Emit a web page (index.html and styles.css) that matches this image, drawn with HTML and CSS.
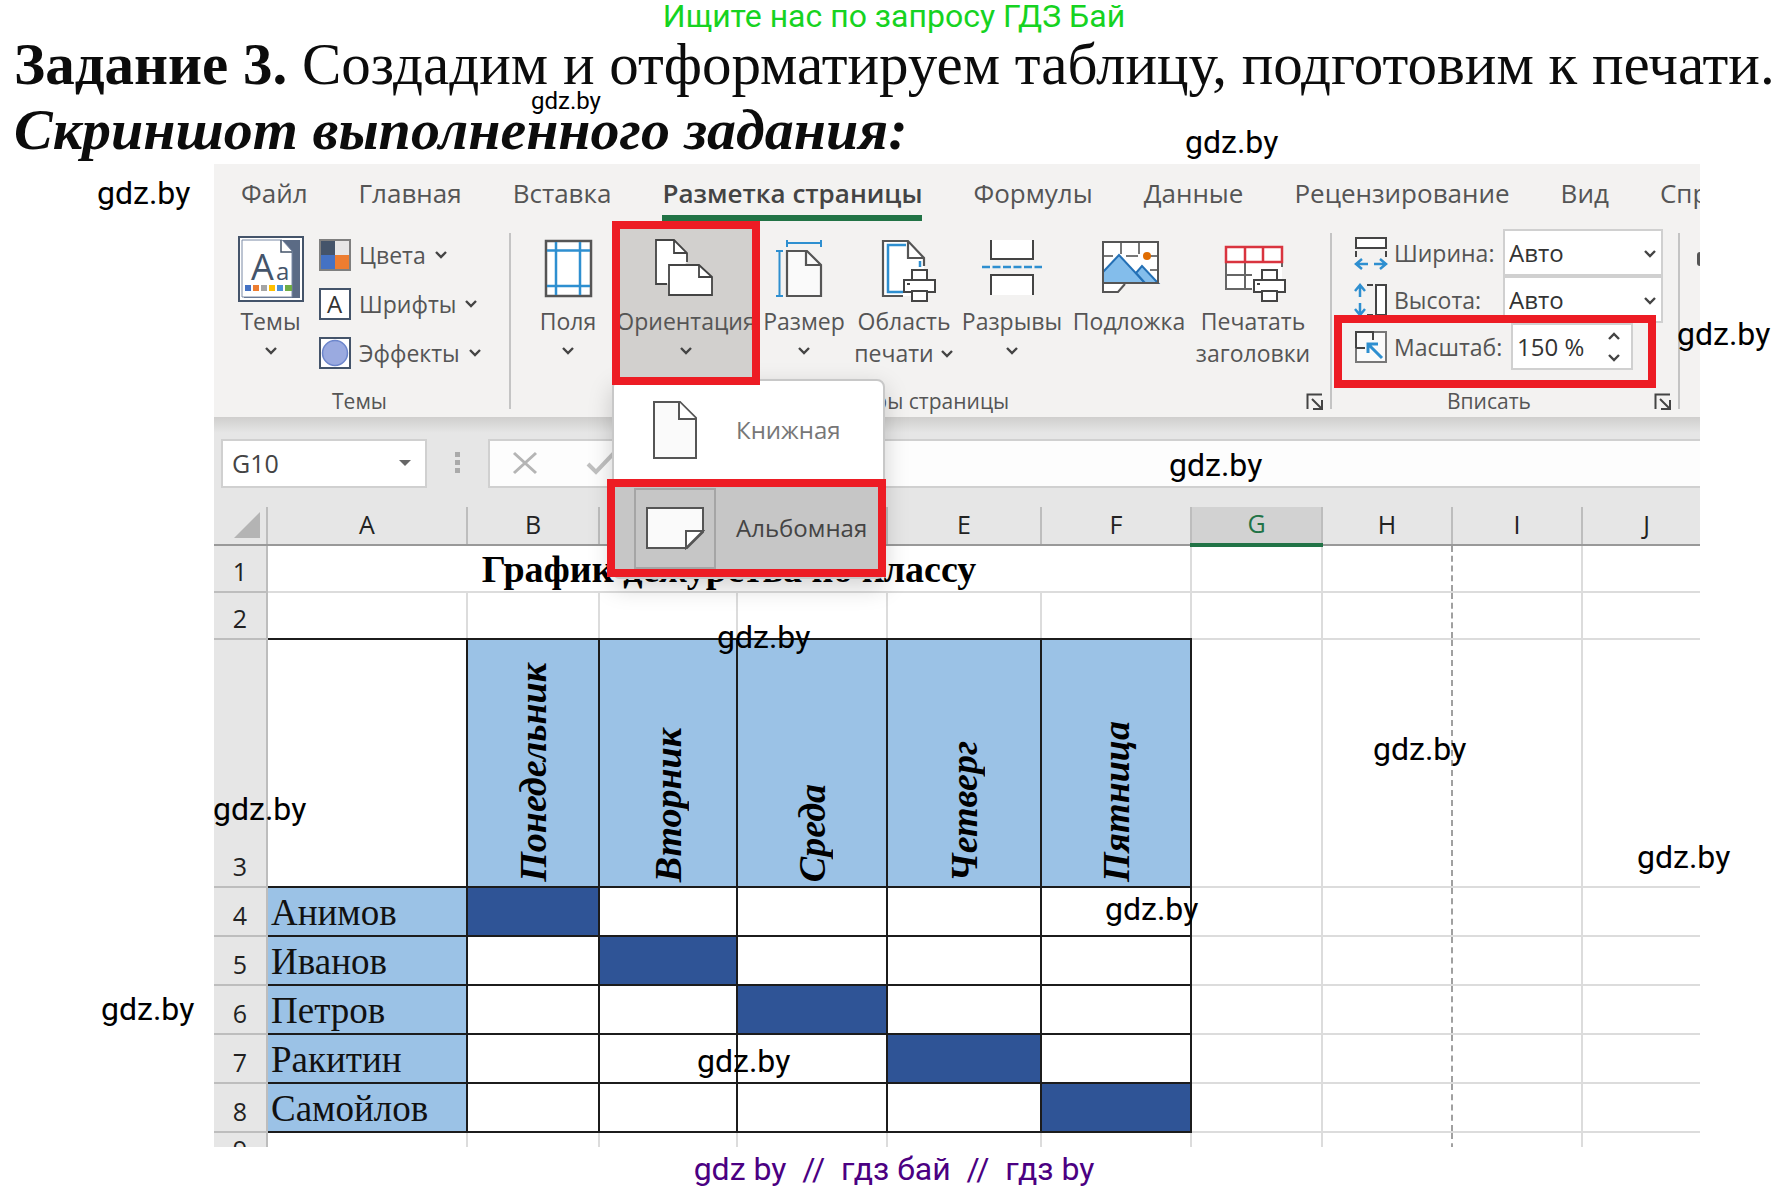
FILE: index.html
```html
<!DOCTYPE html>
<html lang="ru">
<head>
<meta charset="utf-8">
<title>Задание 3</title>
<link rel="stylesheet" href="styles.css">
</head>
<body>
<svg class="defs" width="0" height="0" aria-hidden="true">
  <symbol id="chev" viewBox="0 0 14 10"><path d="M2 2l5 5 5-5" fill="none" stroke="#444" stroke-width="2.4"/></symbol>
  <symbol id="launch" viewBox="0 0 18 18"><path d="M1.500 16V1.500H16M6 6l9 9M16 7v9H7" fill="none" stroke="#444" stroke-width="2"/></symbol>
  <symbol id="printer" viewBox="0 0 34 34"><g fill="#fff" stroke="#444" stroke-width="2"><path d="M9 2h15v10H9z"/><path d="M1 12h31v12H1z"/><path d="M9 23h15v10H9z"/></g><path d="M4 16h3" stroke="#444" stroke-width="2"/></symbol>
</svg>
<div class="page">
  <p class="promo">Ищите нас по запросу ГДЗ Бай</p>
  <h1 class="task"><b>Задание 3.</b> Создадим и отформатируем таблицу, подготовим к печати.</h1>
  <h2 class="subtask">Скриншот выполненного задания:</h2>

  <main class="excel">
    <nav class="tabs">
      <a href="#">Файл</a><a href="#">Главная</a><a href="#">Вставка</a><a href="#" class="active">Разметка страницы</a><a href="#">Формулы</a><a href="#">Данные</a><a href="#">Рецензирование</a><a href="#">Вид</a><a href="#">Справка</a>
    </nav>

    <div class="ribbon">
      <section class="group themes">
        <div class="tools">
          <button class="big"><svg width="66" height="66"><path d="M1 1h64v64H1z" fill="#fff" stroke="#44546a" stroke-width="2"/><path d="M44 4h18v58H6v-2h48V16z" fill="#5b6b85"/><path d="M4 61V4h40l10 11v46z" fill="#fff" stroke="#7a8aa5" stroke-width="1"/><path d="M43 4v12h11" fill="#fff" stroke="#44546a" stroke-width="1.500"/><text x="13" y="44" class="glyph-lg">A</text><text x="38" y="44" class="glyph-md">a</text><path d="M7 49h6v6H7z" fill="#4472c4"/><path d="M15 49h6v6h-6z" fill="#ed7d31"/><path d="M23 49h6v6h-6z" fill="#a5a5a5"/><path d="M31 49h6v6h-6z" fill="#ffc000"/><path d="M39 49h6v6h-6z" fill="#4a90d9"/><path d="M47 49h7v6h-7z" fill="#70ad47"/></svg><span>Темы</span><svg class="chev"><use href="#chev"/></svg></button>
          <div class="stack">
            <button class="small"><svg width="32" height="32"><path d="M0 0h32v32H0z" fill="#7f7f7f"/><path d="M2 2h14v14H2z" fill="#44546a"/><path d="M16 2h14v14H16z" fill="#e7e6e6"/><path d="M2 16h14v14H2z" fill="#4472c4"/><path d="M16 16h14v14H16z" fill="#ed7d31"/></svg>Цвета<svg class="chev"><use href="#chev"/></svg></button>
            <button class="small"><svg width="32" height="32"><path d="M1 1h30v30H1z" fill="#fff" stroke="#44546a" stroke-width="2"/><text x="8" y="25" class="glyph-sm">A</text></svg>Шрифты<svg class="chev"><use href="#chev"/></svg></button>
            <button class="small"><svg width="32" height="32"><path d="M1 1h30v30H1z" fill="#fff" stroke="#44546a" stroke-width="2"/><circle cx="16" cy="16" r="12.500" fill="#9aaae0" stroke="#6d86cc" stroke-width="1.500"/></svg>Эффекты<svg class="chev"><use href="#chev"/></svg></button>
          </div>
        </div>
        <div class="caption">Темы</div>
      </section>

      <section class="group layout">
        <div class="tools">
          <button class="big"><svg width="66" height="66"><path d="M11 5h45v55H11z" fill="#fff" stroke="#555" stroke-width="2.500"/><path d="M12 14.500h43M12 50h43M21 6v53M45 6v53" stroke="#2e8fd0" stroke-width="2.500"/></svg><span>Поля</span><svg class="chev"><use href="#chev"/></svg></button>
          <div class="menu-anchor">
            <button class="big pressed"><svg width="66" height="66"><path d="M14 48H3V4h18l13 13v9" fill="#fff"/><path d="M14 48H3V4h18l13 13v9M21 4v13h13" fill="none" stroke="#444" stroke-width="1.800"/><path d="M16 29h30l13 12v18H16z" fill="#fff" stroke="#444" stroke-width="1.800"/><path d="M46 29v12h13" fill="none" stroke="#444" stroke-width="1.800"/></svg><span>Ориентация</span><svg class="chev"><use href="#chev"/></svg></button>
            <div class="menu">
              <button class="item"><span class="thumb"><svg width="46" height="60"><path d="M2 2h26l16 16v40H2z" fill="#fafafa" stroke="#555" stroke-width="2"/><path d="M27 2v17h17" fill="#fff" stroke="#555" stroke-width="2"/></svg></span>Книжная</button>
              <button class="item chosen"><span class="thumb"><svg width="60" height="44"><path d="M2 2h56v24L42 42H2z" fill="#fafafa" stroke="#555" stroke-width="2"/><path d="M41 42V25h17z" fill="#fff" stroke="#555" stroke-width="2"/></svg></span>Альбомная</button>
            </div>
          </div>
          <button class="big"><svg width="66" height="66"><path d="M16 15h20l14 14v31H16z" fill="#fafafa" stroke="#555" stroke-width="2.200"/><path d="M35 15v14h15" fill="none" stroke="#555" stroke-width="2.200"/><path d="M16 7h34M16 4v7M50 4v7M8.500 15v45M5 15h7M5 60h7" stroke="#2e8fd0" stroke-width="2" fill="none"/></svg><span>Размер</span><svg class="chev"><use href="#chev"/></svg></button>
          <button class="big"><svg width="66" height="66"><path d="M12 5h25l16 17v38H12z" fill="#fff"/><path d="M32 60H12V5h25l16 17v8M37 5v17h16" fill="none" stroke="#555" stroke-width="2.200"/><path d="M32 56H17V9h18M49 25v6" fill="none" stroke="#2e8fd0" stroke-width="2.500"/><use href="#printer" x="32" y="32" width="34" height="34"/></svg><span>Область<br>печати <svg class="chev inline"><use href="#chev"/></svg></span></button>
          <button class="big"><svg width="66" height="66"><path d="M12 4h42v19H12zM12 39h42v20H12z" fill="#fff"/><path d="M12 4v19h42V4M12 59V39h42v20" fill="none" stroke="#444" stroke-width="2"/><path d="M3 31h60" stroke="#2e8fd0" stroke-width="2.500" stroke-dasharray="8 2.500"/></svg><span>Разрывы</span><svg class="chev"><use href="#chev"/></svg></button>
          <button class="big"><svg width="66" height="66"><path d="M7 6h55v41H27l-6 9H7z" fill="#fff"/><path d="M25 6v12M43 6v12M7 20h10M30 20h12M53 20h9M54 34h8" stroke="#777" stroke-width="2"/><path d="M7 36l16-17 26 28H7z" fill="#83bdeb" stroke="#2470b5" stroke-width="2"/><path d="M40 37l6-7 16 17H49z" fill="#83bdeb" stroke="#2470b5" stroke-width="2"/><circle cx="51" cy="20" r="4" fill="#e06c00"/><path d="M7 6h55v41H7zM7 47v9h15l7-8" fill="none" stroke="#555" stroke-width="2"/></svg><span>Подложка</span></button>
          <button class="big"><svg width="66" height="66"><path d="M6 11h56v42H6z" fill="#fff"/><path d="M6 26v27h26M25 26v27M6 39h26M62 26v5" fill="none" stroke="#666" stroke-width="2"/><path d="M6 11h56v15H6zM25 11v15M43 11v15" fill="none" stroke="#d9343f" stroke-width="2.500"/><use href="#printer" x="33" y="32" width="34" height="34"/></svg><span>Печатать<br>заголовки</span></button>
        </div>
        <div class="caption">Параметры страницы</div>
        <svg class="launch"><use href="#launch"/></svg>
      </section>

      <section class="group fit">
        <div class="fields">
          <div class="field"><label for="w"><svg width="34" height="34"><path d="M2 2h30v10H2z" fill="#fff" stroke="#444" stroke-width="2"/><path d="M2 15v6M32 15v6" stroke="#444" stroke-width="2"/><path d="M3 28h11M8 23l-6 5 6 5M31 28H20M26 23l6 5-6 5" fill="none" stroke="#2e8fd0" stroke-width="2.500"/></svg>Ширина:</label><span class="drop"><select id="w"><option>Авто</option></select><svg class="chev"><use href="#chev"/></svg></span></div>
          <div class="field"><label for="h"><svg width="34" height="34"><path d="M22 2h10v30H22z" fill="#fff" stroke="#444" stroke-width="2"/><path d="M13 2h6M13 32h6" stroke="#444" stroke-width="2"/><path d="M6 3v11M1 8l5-6 5 6M6 31V20M1 26l5 6 5-6" fill="none" stroke="#2e8fd0" stroke-width="2.500"/></svg>Высота:</label><span class="drop"><select id="h"><option>Авто</option></select><svg class="chev"><use href="#chev"/></svg></span></div>
          <div class="field scale"><label for="s"><svg width="34" height="34"><path d="M2 2h30v30H2z" fill="#fafafa" stroke="#777" stroke-width="2"/><path d="M2 18V2h17v8M2 18h9" fill="none" stroke="#444" stroke-width="2"/><path d="M28 28L14 14M14 23V14h10" fill="none" stroke="#2e8fd0" stroke-width="3"/></svg>Масштаб:</label><span class="spin"><input id="s" type="text" value="150 %"><span class="arrows"><svg class="chev up"><use href="#chev"/></svg><svg class="chev"><use href="#chev"/></svg></span></span></div>
        </div>
        <div class="caption">Вписать</div>
        <svg class="launch"><use href="#launch"/></svg>
      </section>
      <section class="group rest"><i class="dot"></i></section>
    </div>

    <div class="formula-bar">
      <label class="name-box"><input type="text" value="G10" aria-label="Имя"><svg width="12" height="8"><path d="M0 1h12L6 7z" fill="#666"/></svg></label>
      <svg class="grip" width="6" height="22"><path d="M0 0h5v5H0zM0 8h5v5H0zM0 16h5v5H0z" fill="#aaa"/></svg>
      <div class="formula"><svg width="26" height="24"><path d="M2 2l22 20M24 2L2 22" stroke="#b5b5b5" stroke-width="3"/></svg><svg width="30" height="24"><path d="M2 13l8 8L28 2" fill="none" stroke="#c0c0c0" stroke-width="4"/></svg></div>
    </div>

    <table class="sheet">
      <colgroup><col class="c-n"><col class="c-a"><col class="c-b"><col class="c-c"><col class="c-d"><col class="c-e"><col class="c-f"><col class="c-g"><col class="c-h"><col class="c-h"><col></colgroup>
      <thead>
        <tr><th class="corner"><svg width="26" height="26"><path d="M26 0v26H0z" fill="#b4b4b4"/></svg></th><th>A</th><th>B</th><th>C</th><th>D</th><th>E</th><th>F</th><th class="current">G</th><th>H</th><th>I</th><th>J</th></tr>
      </thead>
      <tbody>
        <tr class="r-std"><th>1</th><td colspan="6" class="title">График дежурства по классу</td><td></td><td class="brk"></td><td></td><td></td></tr>
        <tr class="r-std above"><th>2</th><td></td><td></td><td></td><td></td><td></td><td></td><td></td><td class="brk"></td><td></td><td></td></tr>
        <tr class="r-days"><th>3</th><td class="k"></td><td class="k day"><span>Понедельник</span></td><td class="k day"><span>Вторник</span></td><td class="k day"><span>Среда</span></td><td class="k day"><span>Четверг</span></td><td class="k day"><span>Пятница</span></td><td></td><td class="brk"></td><td></td><td></td></tr>
        <tr class="r-name"><th>4</th><td class="k name">Анимов</td><td class="k on"></td><td class="k"></td><td class="k"></td><td class="k"></td><td class="k"></td><td></td><td class="brk"></td><td></td><td></td></tr>
        <tr class="r-name"><th>5</th><td class="k name">Иванов</td><td class="k"></td><td class="k on"></td><td class="k"></td><td class="k"></td><td class="k"></td><td></td><td class="brk"></td><td></td><td></td></tr>
        <tr class="r-name"><th>6</th><td class="k name">Петров</td><td class="k"></td><td class="k"></td><td class="k on"></td><td class="k"></td><td class="k"></td><td></td><td class="brk"></td><td></td><td></td></tr>
        <tr class="r-name"><th>7</th><td class="k name">Ракитин</td><td class="k"></td><td class="k"></td><td class="k"></td><td class="k on"></td><td class="k"></td><td></td><td class="brk"></td><td></td><td></td></tr>
        <tr class="r-name"><th>8</th><td class="k name">Самойлов</td><td class="k"></td><td class="k"></td><td class="k"></td><td class="k"></td><td class="k on"></td><td></td><td class="brk"></td><td></td><td></td></tr>
        <tr class="r-name last"><th>9</th><td></td><td></td><td></td><td></td><td></td><td></td><td></td><td class="brk"></td><td></td><td></td></tr>
      </tbody>
    </table>
  </main>

  <footer class="links">gdz by&nbsp; //&nbsp; гдз бай&nbsp; //&nbsp; гдз by</footer>

  <span class="wm wm-1">gdz.by</span>
  <span class="wm wm-2">gdz.by</span>
  <span class="wm wm-3">gdz.by</span>
  <span class="wm wm-4">gdz.by</span>
  <span class="wm wm-5">gdz.by</span>
  <span class="wm wm-6">gdz.by</span>
  <span class="wm wm-7">gdz.by</span>
  <span class="wm wm-8">gdz.by</span>
  <span class="wm wm-9">gdz.by</span>
  <span class="wm wm-10">gdz.by</span>
  <span class="wm wm-11">gdz.by</span>
  <span class="wm wm-12">gdz.by</span>
</div>
</body>
</html>
```
FILE: styles.css
```css
* { box-sizing: border-box; }
body { margin: 0; background: #fff; font-family: "Open Sans", "Noto Sans", sans-serif; color: #444; }
.defs { position: absolute; }
svg { display: block; flex: none; }
button, input, select { font: inherit; color: inherit; }
button { border: 0; background: none; padding: 0; }
.page { position: relative; overflow: hidden; }

.promo { margin: 0; text-align: center; font: 32px/32px Roboto, sans-serif; color: #16d321; }
.task, .subtask { margin: 0; padding-left: 14px; font-family: "Liberation Serif", serif; color: #0c0c0c; white-space: nowrap; }
.task { font-size: 59px; line-height: 64px; font-weight: 400; }
.subtask { font-size: 58px; line-height: 68px; font-weight: 700; font-style: italic; }

.excel { margin: 0 88px 0 214px; height: 983px; overflow: hidden; background: #e6e6e6; }

/* ribbon tabs */
.tabs { display: flex; gap: 51px; padding-left: 27px; background: #f3f2f1; font-size: 26px; white-space: nowrap; }
.tabs a { display: flex; align-items: center; height: 57px; padding-top: 6px; border-bottom: 6px solid transparent; color: #555; text-decoration: none; }
.tabs .active { font-weight: 600; color: #444; border-color: #217346; }

/* ribbon body */
.ribbon { display: grid; grid-template-columns: 297px 821px 348px 1fr; height: 196px; background: #f3f2f1; font-size: 23px; line-height: 32px; color: #555; }
.group { position: relative; display: grid; grid-template-rows: 164px 32px; background: linear-gradient(#c4c4c4, #c4c4c4) right 12px / 2px 176px no-repeat; }
.group.rest { background: none; overflow: hidden; }
.dot { width: 3px; height: 14px; margin: 31px 0 0 auto; border-radius: 7px 0 0 7px; background: #555; }
.tools { display: flex; }
.caption { font-size: 21px; line-height: 32px; text-align: center; }
.themes .caption { padding-right: 6px; }
.layout .caption { padding-right: 48px; }
.fit .caption { padding-right: 34px; }
.launch { position: absolute; right: 8px; bottom: 6px; width: 18px; height: 18px; }
.chev { width: 14px; height: 10px; display: inline-block; }

.big { display: flex; flex-direction: column; align-items: center; height: 164px; padding-top: 7px; border: 8px solid transparent; text-align: center; white-space: nowrap; }
.big > svg:first-child { margin-bottom: 3px; }
.big > .chev { margin-top: 9px; }
.inline { vertical-align: 3px; }
.themes .big { width: 113px; }
.stack { display: flex; flex-direction: column; gap: 17px; padding-top: 18px; margin-left: -8px; }
.small { display: flex; align-items: center; gap: 8px; height: 32px; }
.glyph-lg { font-size: 36px; fill: #44546a; }
.glyph-md { font-size: 24px; fill: #44546a; }
.glyph-sm { font-size: 24px; fill: #333; }

.layout .tools { display: grid; grid-template-columns: 88px 148px 88px 112px 104px 130px 118px; padding-left: 13px; }
.menu-anchor { position: relative; }
.pressed { position: relative; z-index: 2; width: 148px; border-color: #ed1c24; background: #d2d0ce; background-clip: padding-box; overflow: hidden; }
.menu { position: absolute; z-index: 1; top: 158px; left: 0; width: 273px; background: #fff; border: 2px solid #c8c8c8; border-radius: 8px; box-shadow: 0 8px 24px rgba(0, 0, 0, .18); }
.item { display: flex; align-items: center; gap: 20px; height: 98px; padding-left: 20px; font-size: 24px; color: #777; white-space: nowrap; }
.thumb { display: flex; align-items: center; justify-content: center; width: 82px; height: 81px; }
.chosen { width: 279px; margin-left: -7px; padding-left: 19px; border: 8px solid #ed1c24; background: #c6c6c6; color: #444; }
.chosen .thumb { border: 2px solid #a5a5a5; }

.fields { padding-top: 8px; }
.field { display: flex; align-items: center; height: 47px; padding-left: 22px; }
.field label { display: flex; align-items: center; gap: 6px; width: 149px; white-space: nowrap; }
.drop { position: relative; width: 160px; }
.drop select { appearance: none; display: block; width: 160px; height: 47px; padding: 0 12px 0 4px; border: 2px solid #d0d0d0; border-radius: 0; background: #fff; color: #333; font-size: 24px; }
.drop .chev { position: absolute; right: 6px; top: 20px; }
.scale { position: relative; align-items: flex-start; height: 73px; width: 322px; margin: -8px 0 0 2px; padding-left: 12px; border: 8px solid #ed1c24; }
.scale label { width: 157px; height: 47px; }
.spin { display: flex; align-items: center; width: 122px; height: 47px; background: #fff; border: 2px solid #d0d0d0; }
.spin input { width: 94px; border: 0; background: none; padding: 0 0 0 4px; color: #333; outline: 0; font-size: 24px; }
.arrows { display: flex; flex-direction: column; gap: 12px; }
.up { transform: scaleY(-1); }

/* formula bar */
.formula-bar { display: flex; align-items: center; height: 90px; padding: 2px 0 0 7px; background: linear-gradient(#cfcecd, #e6e6e6 16px); }
.name-box { display: flex; align-items: center; width: 206px; height: 49px; padding: 0 14px 0 9px; background: #fff; border: 2px solid #d0d0d0; }
.name-box input { flex: 1; min-width: 0; padding: 0; border: 0; outline: 0; font-size: 25px; }
.grip { margin: 0 27px 0 28px; }
.formula { flex: 1; display: flex; align-items: center; gap: 48px; height: 49px; padding-left: 22px; background: #fdfdfd; border: 2px solid #d0d0d0; border-right: 0; }

/* worksheet: the last column runs on past the visible edge */
.sheet { table-layout: fixed; width: calc(100% + 12px); border-collapse: collapse; background: #fff; color: #000; }
.c-n { width: 53px; } .c-a { width: 200px; } .c-b { width: 132px; } .c-c { width: 138px; } .c-d { width: 150px; }
.c-e { width: 154px; } .c-f { width: 150px; } .c-g { width: 131px; } .c-h { width: 130px; }
.sheet th { padding: 0 0 4px; background: #e6e6e6; font-size: 25px; font-weight: 400; line-height: 32px; color: #222; vertical-align: bottom; border: 2px solid #bdbdbd; border-left: 0; }
.sheet thead th { height: 38px; border-top: 0; border-bottom-color: #999; }
.sheet .corner svg { margin: 0 0 2px 20px; }
.sheet thead .current { background: #d2d2d2; color: #217346; border-bottom: 4px solid #217346; }
.sheet td { padding: 0; border: 2px solid #dcdcdc; }
.sheet .brk { border-right: 2px dashed #a0a0a0; }
.sheet .brk + td { border-left: 2px dashed #a0a0a0; }
.sheet .k { border: 2px solid #1c1c1c; }
.sheet .above td:nth-child(-n+7) { border-bottom-color: #1c1c1c; }
.sheet .title { text-align: center; font: 700 38px/40px "Liberation Serif", serif; }
.r-std { height: 47px; }
.r-days { height: 248px; }
.r-name { height: 49px; }
.sheet .last th { vertical-align: top; }
.sheet .day { background: #9bc2e6; vertical-align: bottom; }
.day span { display: block; margin: 0 auto; width: 40px; padding-top: 4px; writing-mode: vertical-rl; transform: rotate(180deg); font: italic 700 38px/40px "Liberation Serif", serif; }
.sheet .name { background: #9bc2e6; padding: 2px 0 0 3px; font: 37px/40px "Liberation Serif", serif; color: #111; }
.sheet .on { background: #2f5496; }

.links { text-align: center; font: 32px/45px Roboto, sans-serif; color: #4b0082; }

/* watermarks laid over the page */
.wm { position: absolute; z-index: 5; font: 32px/40px Roboto, sans-serif; color: #000; }
.wm-1 { left: 531px; top: 81px; font-size: 24px; }
.wm-2 { left: 1185px; top: 122px; }
.wm-3 { left: 97px; top: 173px; }
.wm-4 { left: 1677px; top: 314px; }
.wm-5 { left: 1169px; top: 445px; }
.wm-6 { left: 717px; top: 617px; }
.wm-7 { left: 1373px; top: 729px; }
.wm-8 { left: 213px; top: 789px; }
.wm-9 { left: 1637px; top: 837px; }
.wm-10 { left: 1105px; top: 889px; }
.wm-11 { left: 101px; top: 989px; }
.wm-12 { left: 697px; top: 1041px; }
```
